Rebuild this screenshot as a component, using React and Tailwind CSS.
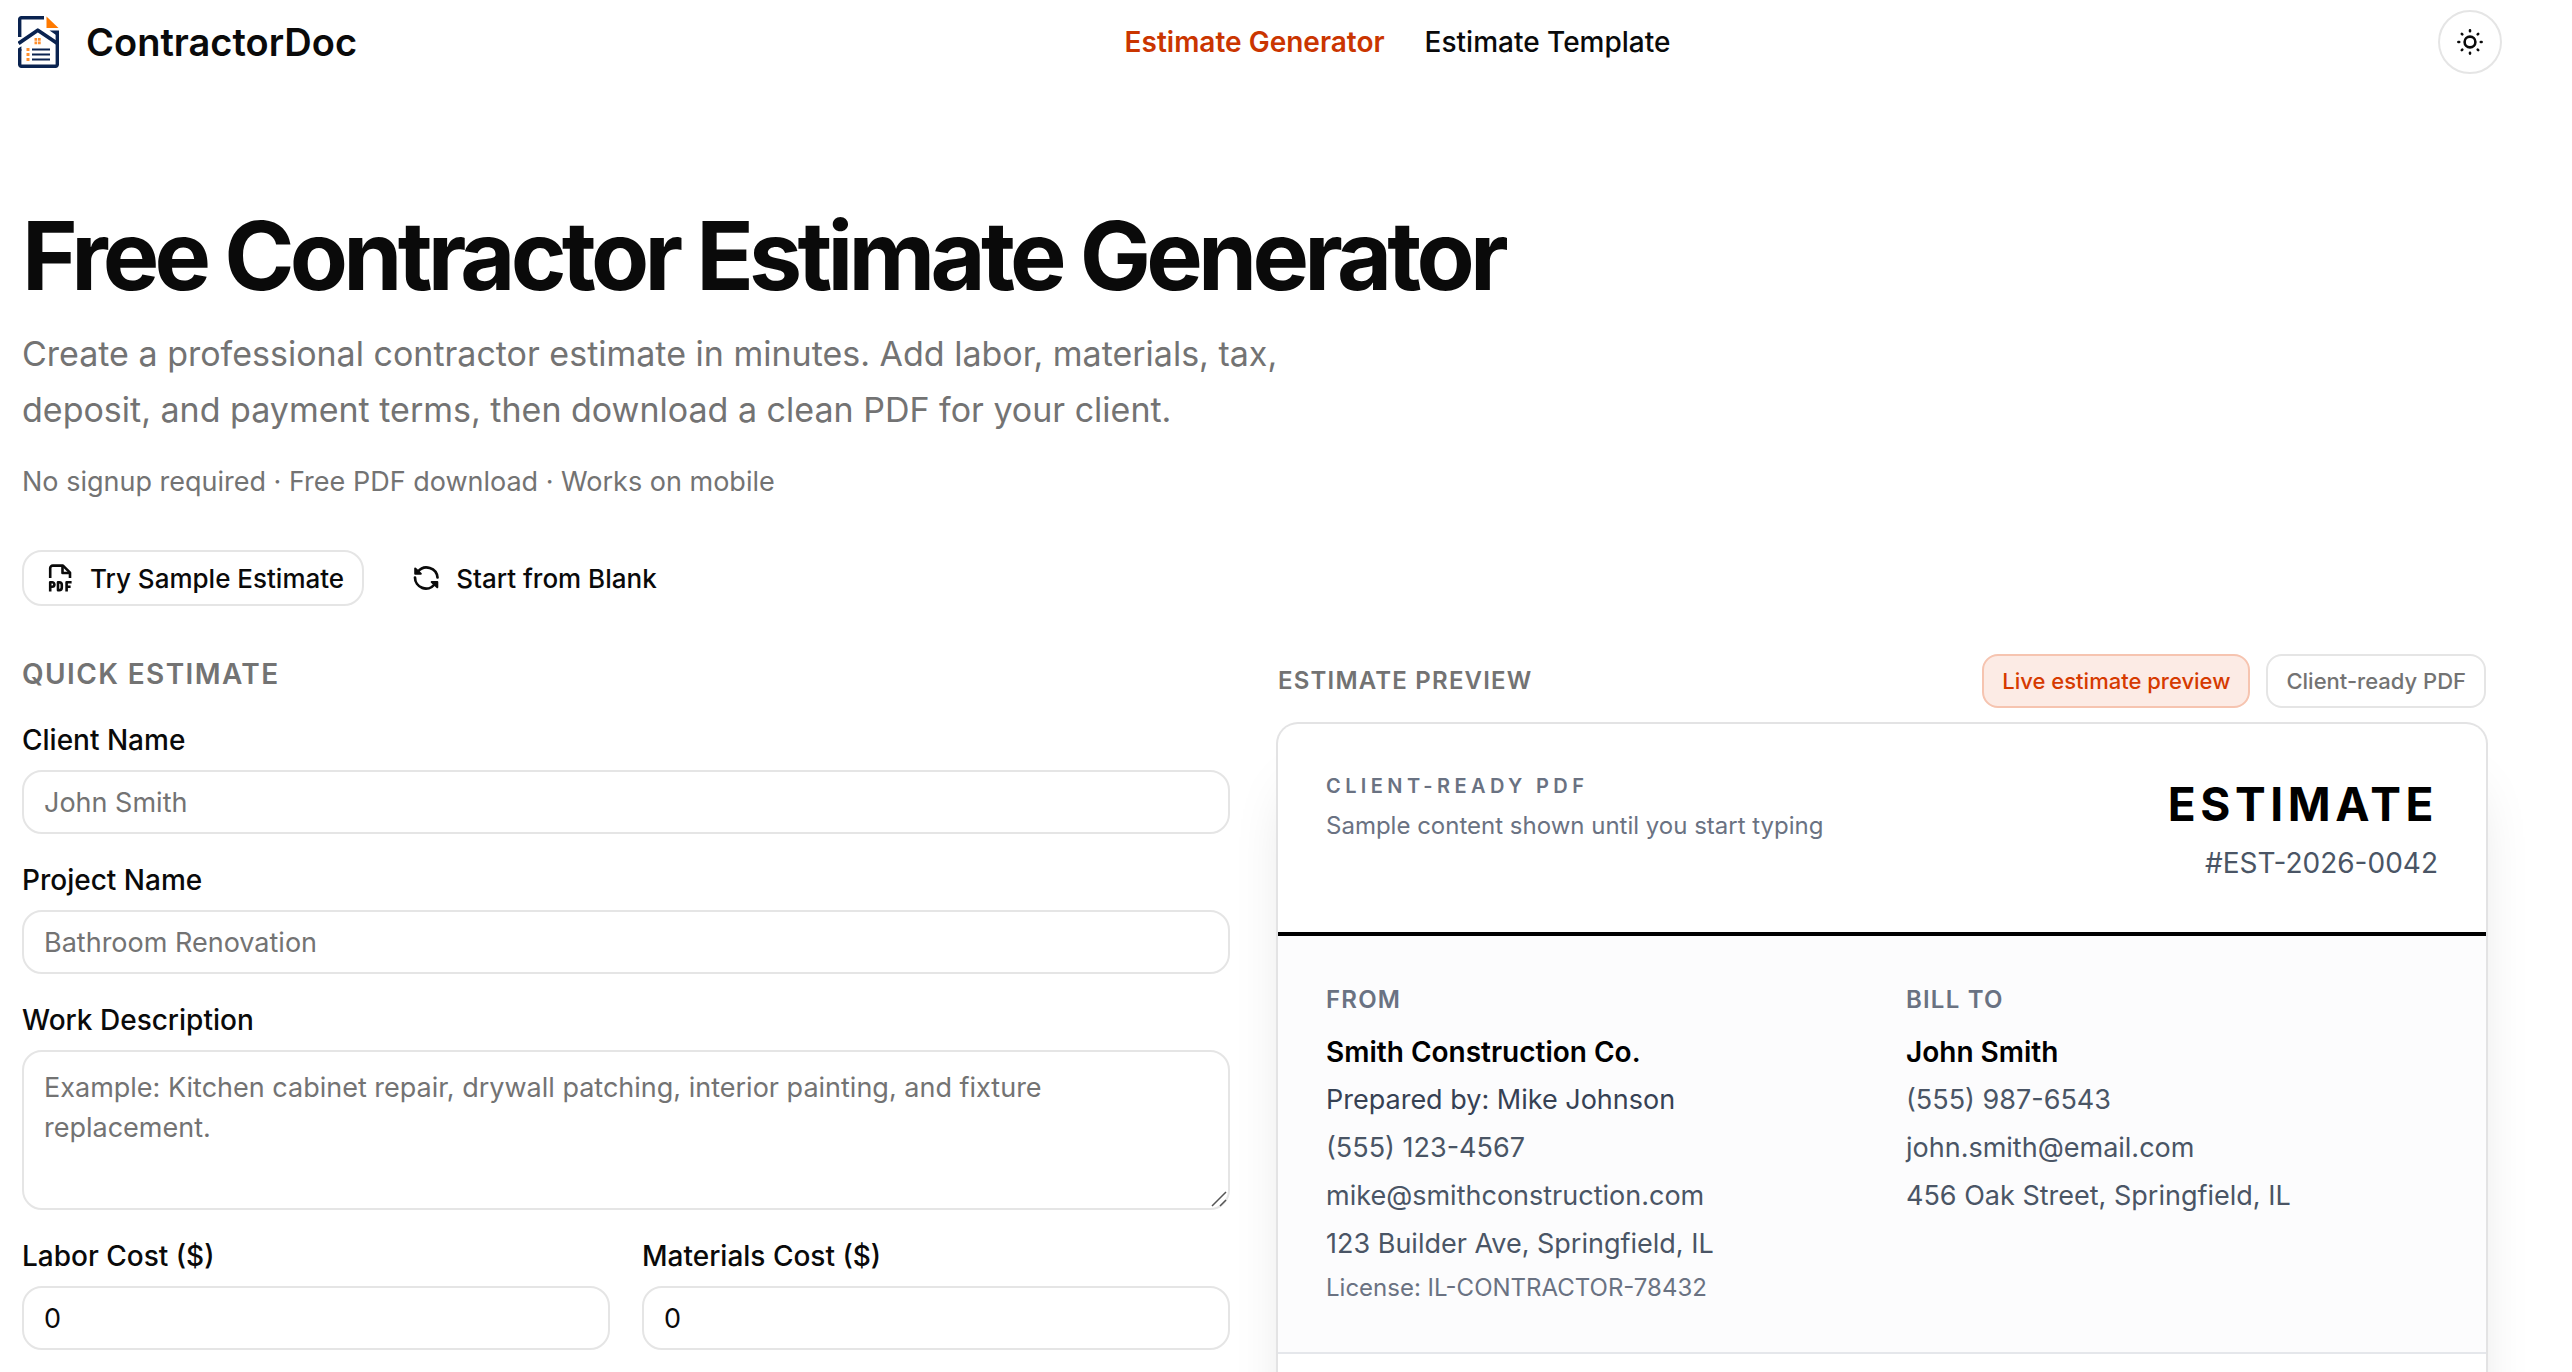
import { useState } from "react";

const fromLines = [
  "(555) 123-4567",
  "mike@smithconstruction.com",
  "123 Builder Ave, Springfield, IL",
];

const billToLines = [
  "(555) 987-6543",
  "john.smith@email.com",
  "456 Oak Street, Springfield, IL",
];

const inputClass =
  "w-full rounded-[20px] border-2 border-[#e5e5e5] bg-white px-5 text-[27px] text-[#0a0a0a] placeholder:text-[#737373] focus:outline-none";

function Logo() {
  return (
    <svg viewBox="0 0 42 52" className="h-[52px] w-[42px]" aria-hidden="true">
      <g fill="none" stroke="#0a2350" strokeWidth="3.4" strokeLinejoin="round">
        <path d="M26 1.7H3.3a1.6 1.6 0 0 0-1.6 1.6V21" />
        <path d="M1.700 33v15.600a1.600 1.600 0 0 0 1.600 1.600h34.400a1.600 1.600 0 0 0 1.600-1.600V16" />
        <path d="M0.5 27.5 19.8 14.2 39.5 27.5" strokeWidth="3.8" />
        <path d="M14 33.5h18M14 38.5h18M14 43.5h18" strokeWidth="2" />
      </g>
      <path d="M0 32.5 3.4 30.2V35H0zM31.500 14.500H41V21z" fill="#0a2350" />
      <path d="M28.5 0.5 40.5 12h-12z" fill="#ff7a00" />
      <g fill="#ff8f2e">
        <path d="M16.5 22h2.7v2.7h-2.7zM20 22h2.7v2.7H20zM16.5 25.5h2.7v2.7h-2.7zM20 25.5h2.7v2.7H20z" />
        <path d="M8.5 32h3v3h-3zM8.5 37h3v3h-3zM8.5 42h3v3h-3z" />
      </g>
    </svg>
  );
}

function SunIcon() {
  return (
    <svg viewBox="0 0 32 32" className="size-8" fill="none" stroke="currentColor" strokeWidth="2.6" strokeLinecap="round" aria-hidden="true">
      <circle cx="16" cy="16" r="5.4" />
      <path d="M16 4.4v.8M16 26.8v.8M4.4 16h.8M26.8 16h.8M7.8 7.8l.5.5M23.7 23.7l.5.5M7.8 24.2l.5-.5M23.7 8.3l.5-.5" />
    </svg>
  );
}

function PdfIcon() {
  return (
    <svg viewBox="0 0 28 28" className="size-7" fill="none" stroke="currentColor" strokeWidth="2.6" strokeLinejoin="round" aria-hidden="true">
      <path d="M4.2 14V4.2a2.6 2.6 0 0 1 2.6-2.6H17l7 7V14" />
      <path d="M16.5 2v7h7" />
      <path d="M4.2 27.5v-9.3h1.900a2.3 2.3 0 0 1 0 4.6H4.2M12 18.2v8h1.2a2.6 2.6 0 0 0 2.6-2.6v-2.8a2.6 2.6 0 0 0-2.6-2.6zM20.6 27.5v-9.3h5M20.6 22.8h4" />
    </svg>
  );
}

function RefreshIcon() {
  return (
    <svg viewBox="0 0 28 28" className="size-7" fill="none" stroke="currentColor" strokeWidth="2.7" strokeLinecap="round" strokeLinejoin="round" aria-hidden="true">
      <path d="M25.5 13.5A11 11 0 0 0 6 7.5" />
      <path d="M3 13.5a11 11 0 0 0 19.5 7" />
      <path d="M3.2 4.5v5.3h5.6zM25.3 23.2v-5.3h-5.6z" fill="currentColor" strokeWidth="2" />
    </svg>
  );
}

function Field({ id, label, children }) {
  return (
    <div className="flex flex-col gap-4">
      <label htmlFor={id} className="text-[28px] leading-none font-medium">
        {label}
      </label>
      {children}
    </div>
  );
}

export default function App() {
  const [labor, setLabor] = useState("0");
  const [materials, setMaterials] = useState("0");

  return (
    <div className="h-screen overflow-hidden bg-white font-['Inter',sans-serif] text-[#0a0a0a]">
      <header className="flex h-[84px] items-center justify-between pr-[70px] pl-[18px]">
        <a href="#" className="flex items-center gap-[26px]">
          <Logo />
          <span className="text-[38px] leading-none font-semibold">ContractorDoc</span>
        </a>
        <nav className="flex gap-10 text-[28px] leading-10 font-medium">
          <a href="#" className="font-semibold text-[#ca3500]">Estimate Generator</a>
          <a href="#">Estimate Template</a>
        </nav>
        <button
          type="button"
          aria-label="Toggle theme"
          className="flex size-16 items-center justify-center rounded-full border-2 border-[#e5e5e5]"
        >
          <SunIcon />
        </button>
      </header>

      <main className="pt-[124px] pr-[86px] pl-[22px]">
        <h1 className="text-[95px] leading-[96px] font-bold tracking-tighter">
          Free Contractor Estimate Generator
        </h1>
        <p className="mt-[22px] max-w-[1344px] text-[34px] leading-[56px] text-[#737373]">
          Create a professional contractor estimate in minutes. Add labor, materials, tax,{" "}
          <br />
          deposit, and payment terms, then download a clean PDF for your client.
        </p>
        <p className="mt-6 text-[27px] leading-10 text-[#737373]">
          No signup required · Free PDF download · Works on mobile
        </p>

        <div className="mt-12 flex gap-6 text-[26px] font-medium">
          <button type="button" className="flex h-14 items-center gap-4 rounded-[20px] border-2 border-[#e5e5e5] pr-[18px] pl-[22px]">
            <PdfIcon />
            Try Sample Estimate
          </button>
          <button type="button" className="flex h-14 items-center gap-4 rounded-[20px] border-2 border-transparent pr-[18px] pl-[22px]">
            <RefreshIcon />
            Start from Blank
          </button>
        </div>

        <div className="mt-12 grid grid-cols-2 gap-12">
          <form className="flex flex-col gap-8">
            <h2 className="text-[28px] leading-10 font-semibold tracking-wider text-[#737373]">
              QUICK ESTIMATE
            </h2>
            <Field id="client" label="Client Name">
              <input id="client" placeholder="John Smith" className={`${inputClass} h-16`} />
            </Field>
            <Field id="project" label="Project Name">
              <input id="project" placeholder="Bathroom Renovation" className={`${inputClass} h-16`} />
            </Field>
            <Field id="work" label="Work Description">
              <div className="relative flex">
                <textarea
                  id="work"
                  placeholder="Example: Kitchen cabinet repair, drywall patching, interior painting, and fixture replacement."
                  className={`${inputClass} h-40 resize-none py-4 leading-10`}
                />
                {/* resize grip */}
                <svg viewBox="0 0 16 16" className="pointer-events-none absolute right-[3px] bottom-[3px] size-4" fill="none" stroke="#555" strokeWidth="1.5" aria-hidden="true">
                  <path d="M1 15 15 1M9 15l6-6" />
                </svg>
              </div>
            </Field>
            <div className="grid grid-cols-2 gap-8">
              <Field id="labor" label="Labor Cost ($)">
                <input id="labor" value={labor} onChange={(e) => setLabor(e.target.value)} className={`${inputClass} h-16`} />
              </Field>
              <Field id="materials" label="Materials Cost ($)">
                <input id="materials" value={materials} onChange={(e) => setMaterials(e.target.value)} className={`${inputClass} h-16`} />
              </Field>
            </div>
          </form>

          <section>
            <div className="flex items-center justify-between">
              <h2 className="text-[24px] leading-8 font-semibold tracking-wider text-[#737373]">
                ESTIMATE PREVIEW
              </h2>
              <div className="flex gap-4 text-[22px] font-medium">
                <span className="flex h-[54px] items-center rounded-[16px] border-2 border-[#f6c4b0] bg-[#fcebe5] px-[18px] text-[#d63a00]">
                  Live estimate preview
                </span>
                <span className="flex h-[54px] items-center rounded-[16px] border-2 border-[#e5e5e5] px-[18px] text-[#737373]">
                  Client-ready PDF
                </span>
              </div>
            </div>

            <article className="mt-4 overflow-hidden rounded-[20px] bg-white text-black shadow-[0_50px_60px_-24px_rgba(0,0,0,0.2)] ring-2 ring-[#e3e3e4]">
              <div className="flex justify-between border-b-4 border-black px-12 pt-[46px] pb-12">
                <div>
                  <p className="text-[20px] leading-8 font-semibold tracking-[0.22em] text-[#6a7282]">
                    CLIENT-READY PDF
                  </p>
                  <p className="mt-2 text-[24px] leading-8 text-[#6a7282]">
                    Sample content shown until you start typing
                  </p>
                </div>
                <div className="text-right">
                  <p className="text-[46px] leading-[68px] font-bold tracking-widest">ESTIMATE</p>
                  <p className="mt-1 text-[28px] leading-[42px] text-[#4a5565]">#EST-2026-0042</p>
                </div>
              </div>

              <div className="grid grid-cols-2 gap-12 border-b-2 border-[#e5e7eb] bg-[#fcfcfd] p-12 text-[27px] leading-10 text-[#4a5565]">
                <div className="flex flex-col gap-2">
                  <h3 className="mb-2 text-[24px] leading-8 font-semibold tracking-wider text-[#6a7282]">FROM</h3>
                  <p className="text-[28px] font-semibold text-black">Smith Construction Co.</p>
                  <p className="text-[#364153]">Prepared by: Mike Johnson</p>
                  {fromLines.map((line) => (
                    <p key={line}>{line}</p>
                  ))}
                  <p className="text-[24px] leading-8 text-[#6a7282]">License: IL-CONTRACTOR-78432</p>
                </div>
                <div className="flex flex-col gap-2">
                  <h3 className="mb-2 text-[24px] leading-8 font-semibold tracking-wider text-[#6a7282]">BILL TO</h3>
                  <p className="text-[28px] font-semibold text-black">John Smith</p>
                  {billToLines.map((line) => (
                    <p key={line}>{line}</p>
                  ))}
                </div>
              </div>
              <div className="h-64" />
            </article>
          </section>
        </div>
      </main>
    </div>
  );
}
